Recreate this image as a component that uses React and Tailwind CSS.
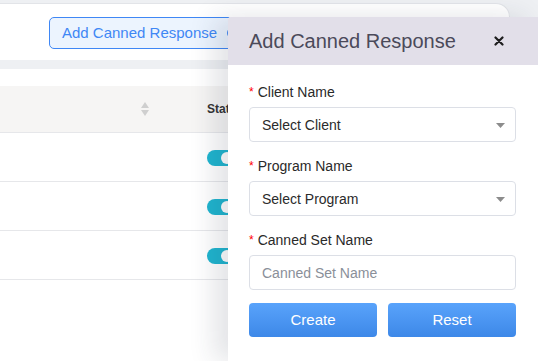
import React from 'react';

const font = { fontFamily: '"Liberation Sans", Arial, sans-serif' };

const Toggle = () => (
  <div className="w-[40px] h-[16px] rounded-full bg-[#1fb5cf] relative">
    <div className="absolute left-[14px] top-[2px] w-[12px] h-[12px] rounded-full bg-white" />
  </div>
);

const Field = ({ label, children }) => (
  <div className="mb-[15px]">
    <div className="h-[18px] flex items-center text-[14px] text-[#2a2a2a] mb-[6px]">
      <span className="text-[#f00] mr-[4px] text-[12px]">*</span>
      {label}
    </div>
    {children}
  </div>
);

const SelectBox = ({ text }) => (
  <div className="h-[35px] border border-[#dcdfe6] rounded-[4px] flex items-center justify-between pl-[12px] pr-[10px] pt-[2px] bg-white">
    <span className="text-[14px] text-[#2b2b2b]">{text}</span>
    <svg width="9" height="5" viewBox="0 0 9 5"><path d="M0 0h9L4.5 5z" fill="#8c8c8c" /></svg>
  </div>
);

export default function App() {
  return (
    <div style={font} className="relative w-[538px] h-[361px] overflow-hidden bg-[#eef0f3]">
      {/* page behind */}
      <div className="pt-[3px]">
        <div className="mr-[28px] h-[57px] bg-white border-t border-r border-[#e2e4e8] rounded-tr-[14px] flex items-start pt-[13px] pl-[49px] gap-[13px]">
          <div className="h-[32px] pl-[12px] pr-[10px] flex items-center gap-[10px] border border-[#3f87f5] bg-[#ecf4fe] rounded-[5px] text-[15px] text-[#3f87f5]">
            Add Canned Response
            <span className="w-[12px] h-[12px] rounded-full border border-[#3f87f5]" />
          </div>
          <div className="w-[227px] h-[32px] border border-[#9cc2f8] bg-[#ecf4fe] rounded-[5px]" />
        </div>
        <div className="mt-[9px] bg-white h-[300px] pt-[17px]">
          <div className="h-[47px] bg-[#f6f5f4] border-b border-[#e6e7ea] flex items-center">
            <div className="w-[141px]" />
            <svg width="8" height="14" viewBox="0 0 8 14">
              <path d="M4 0L8 6H0z M0 8h8L4 14z" fill="#cfcfcf" />
            </svg>
            <div className="ml-[58px] text-[12px] font-bold text-[#333]">Status</div>
          </div>
          {[0, 1, 2].map((i) => (
            <div key={i} className="h-[49px] border-b border-[#e6e7ea] flex items-center pl-[207px] pt-[1px]">
              <Toggle />
            </div>
          ))}
        </div>
      </div>

      {/* drawer */}
      <div className="absolute top-[17px] right-0 bottom-0 w-[310px] bg-white rounded-tl-[3px] overflow-hidden shadow-[-14px_0_26px_rgba(40,50,70,0.13)] flex flex-col">
        <div className="h-[48px] bg-[#e2dfe9] flex items-center justify-between pl-[21px] pr-[34px]">
          <span className="text-[20px] text-[#4b4a5a]">Add Canned Response</span>
          <svg width="10" height="10" viewBox="0 0 10 10">
            <path d="M1.5 1.5l7 7M8.5 1.5l-7 7" stroke="#1e1e1e" strokeWidth="2.2" strokeLinecap="round" />
          </svg>
        </div>
        <div className="pl-[21px] pr-[22px] pt-[18px]">
          <Field label="Client Name">
            <SelectBox text="Select Client" />
          </Field>
          <Field label="Program Name">
            <SelectBox text="Select Program" />
          </Field>
          <Field label="Canned Set Name">
            <div className="h-[35px] border border-[#dcdfe6] rounded-[4px] flex items-center pl-[12px] pt-[2px] text-[14px] text-[#8a8f99]">
              Canned Set Name
            </div>
          </Field>
          <div className="flex gap-[11px] -mt-[2px]">
            <button className="flex-1 h-[34px] rounded-[4px] bg-gradient-to-b from-[#59a3fb] to-[#3d88e8] text-white text-[15px]">
              Create
            </button>
            <button className="flex-1 h-[34px] rounded-[4px] bg-gradient-to-b from-[#59a3fb] to-[#3d88e8] text-white text-[15px]">
              Reset
            </button>
          </div>
        </div>
      </div>
    </div>
  );
}
